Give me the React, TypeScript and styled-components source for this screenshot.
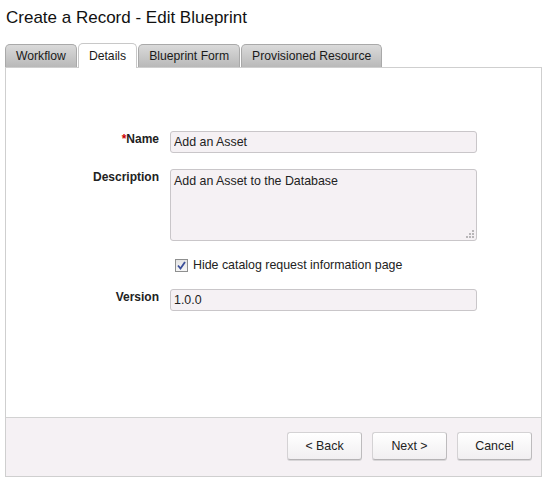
import React, { useState } from 'react'
import styled, { createGlobalStyle } from 'styled-components'

const GlobalStyle = createGlobalStyle`
  html, body {
    margin: 0;
    padding: 0;
    background: #ffffff;
  }
  body {
    font-family: Arial, "Liberation Sans", sans-serif;
    color: #222;
  }
`

const Page = styled.div`
  width: 548px;
  height: 482px;
  padding: 7px 6px 0 5px;
  box-sizing: border-box;
`

const Title = styled.h1`
  margin: 0 0 0 1px;
  font-size: 17px;
  font-weight: normal;
  color: #111;
  line-height: 22px;
`

const TabBar = styled.div`
  display: flex;
  margin-top: 14px;
  height: 24px;
  align-items: flex-end;
`

const Tab = styled.div<{ $active?: boolean }>`
  height: ${p => (p.$active ? '25px' : '23px')};
  box-sizing: border-box;
  padding: 0 10px;
  margin-right: 1px;
  border: 1px solid ${p => (p.$active ? '#c8c8c8' : '#a9a9a9')};
  border-bottom: none;
  border-radius: 5px 5px 0 0;
  background: ${p => (p.$active ? '#ffffff' : 'linear-gradient(#dadada, #b9b9b9)')};
  font-size: 12.2px;
  color: #1a1a1a;
  display: flex;
  align-items: center;
  position: relative;
  top: ${p => (p.$active ? '1px' : '0')};
`

const Panel = styled.div`
  border: 1px solid #cfcfcf;
  height: 408px;
  display: flex;
  flex-direction: column;
`

const Body = styled.div`
  flex: 1;
  padding-top: 63px;
`

const Row = styled.div<{ $gap?: number }>`
  display: grid;
  grid-template-columns: 153px 307px;
  column-gap: 11px;
  margin-bottom: ${p => p.$gap ?? 16}px;
`

const Label = styled.label`
  text-align: right;
  font-size: 12px;
  font-weight: bold;
  color: #222;
  padding-top: 1px;
`

const Req = styled.span`
  color: #c00;
`

const TextInput = styled.input`
  height: 22px;
  box-sizing: border-box;
  border: 1px solid #c9c6c9;
  border-radius: 3px;
  background: #f5f1f4;
  font-family: Arial, "Liberation Sans", sans-serif;
  font-size: 12.4px;
  color: #222;
  padding: 0 3px;
  outline: none;
`

const AreaWrap = styled.div`
  position: relative;
  height: 72px;
`

const TextArea = styled.textarea`
  width: 100%;
  height: 72px;
  box-sizing: border-box;
  border: 1px solid #c9c6c9;
  border-radius: 3px;
  background: #f5f1f4;
  font-family: Arial, "Liberation Sans", sans-serif;
  font-size: 12.4px;
  color: #222;
  padding: 4px 3px;
  resize: none;
  outline: none;
  display: block;
`

const Grip = styled.svg`
  position: absolute;
  right: 2px;
  bottom: 2px;
`

const CheckLine = styled.label`
  grid-column: 2;
  display: flex;
  align-items: center;
  gap: 5px;
  padding-left: 5px;
  font-size: 12.4px;
  color: #222;
`

const Box = styled.span`
  width: 11px;
  height: 11px;
  border: 1px solid #8e8f8f;
  background: linear-gradient(#e4e4e4, #f6f6f6);
  display: flex;
  align-items: center;
  justify-content: center;
`

const Footer = styled.div`
  height: 58px;
  border-top: 1px solid #d2d2d2;
  background: #f5f1f4;
  display: flex;
  justify-content: flex-end;
  align-items: center;
  gap: 10px;
  padding-right: 9px;
`

const Button = styled.button`
  width: 75px;
  height: 28px;
  margin-bottom: 2px;
  border: 1px solid #d4d2d4;
  border-bottom-color: #b5b3b5;
  border-right-color: #bdbbbd;
  border-radius: 3px;
  background: linear-gradient(#ffffff, #f1eff1);
  font-family: Arial, "Liberation Sans", sans-serif;
  font-size: 12.4px;
  color: #222;
  box-shadow: 0 1px 0 #d8d6d8;
`

export default function App() {
  const [hide, setHide] = useState(true)
  return (
    <Page>
      <GlobalStyle />
      <Title>Create a Record - Edit Blueprint</Title>
      <TabBar>
        <Tab>Workflow</Tab>
        <Tab $active>Details</Tab>
        <Tab>Blueprint Form</Tab>
        <Tab>Provisioned Resource</Tab>
      </TabBar>
      <Panel>
        <Body>
          <Row>
            <Label><Req>*</Req>Name</Label>
            <TextInput defaultValue="Add an Asset" />
          </Row>
          <Row $gap={17}>
            <Label>Description</Label>
            <AreaWrap>
              <TextArea defaultValue="Add an Asset to the Database" />
              <Grip width="9" height="9" viewBox="0 0 9 9">
                <g fill="#b8b6b8">
                  <rect x="6" y="0" width="2" height="2" />
                  <rect x="3" y="3" width="2" height="2" />
                  <rect x="6" y="3" width="2" height="2" />
                  <rect x="0" y="6" width="2" height="2" />
                  <rect x="3" y="6" width="2" height="2" />
                  <rect x="6" y="6" width="2" height="2" />
                </g>
              </Grip>
            </AreaWrap>
          </Row>
          <Row $gap={17}>
            <CheckLine onClick={() => setHide(!hide)}>
              <Box>
                {hide && (
                  <svg width="9" height="9" viewBox="0 0 9 9">
                    <path d="M1 4.5 L3.5 7.5 L8 1" fill="none" stroke="#3b4f9a" strokeWidth="1.8" />
                  </svg>
                )}
              </Box>
              Hide catalog request information page
            </CheckLine>
          </Row>
          <Row>
            <Label>Version</Label>
            <TextInput defaultValue="1.0.0" />
          </Row>
        </Body>
        <Footer>
          <Button>&lt; Back</Button>
          <Button>Next &gt;</Button>
          <Button>Cancel</Button>
        </Footer>
      </Panel>
    </Page>
  )
}
